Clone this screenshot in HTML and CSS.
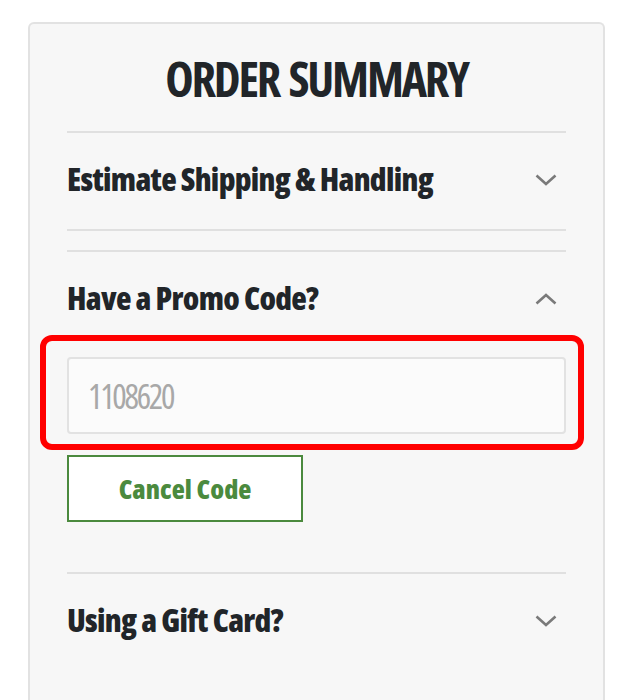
FILE: index.html
```html
<!DOCTYPE html>
<html>
<head>
<meta charset="utf-8">
<link rel="stylesheet" href="styles.css">
</head>
<body>
<div class="card">
  <h1 class="title">ORDER SUMMARY</h1>
  <section class="section collapsed">
    <div class="head">
      <span class="label">Estimate Shipping &amp; Handling</span>
      <svg class="chev" viewBox="0 0 22 12"><polyline points="1.5,1.5 11,10 20.5,1.5"/></svg>
    </div>
  </section>
  <section class="section open">
    <div class="head">
      <span class="label">Have a Promo Code?</span>
      <svg class="chev" viewBox="0 0 22 12"><polyline points="1.5,10.5 11,2 20.5,10.5"/></svg>
    </div>
    <div class="field-wrap">
      <input class="field" type="text" placeholder="1108620">
      <div class="highlight"></div>
    </div>
    <button class="cancel">Cancel Code</button>
  </section>
  <section class="section">
    <div class="head">
      <span class="label">Using a Gift Card?</span>
      <svg class="chev" viewBox="0 0 22 12"><polyline points="1.5,1.5 11,10 20.5,1.5"/></svg>
    </div>
  </section>
</div>
</body>
</html>
```
FILE: styles.css
```css
* { box-sizing: border-box; }
body {
  margin: 0;
  background: #fff;
  font-family: "Open Sans", "Roboto", sans-serif;
  font-stretch: condensed;
  color: #212529;
}
.card {
  margin: 22px 0 0 28px;
  width: 577px;
  height: 700px;
  background: #f7f7f7;
  border: 2px solid #e2e2e2;
  border-bottom: none;
  border-radius: 6px 6px 0 0;
  padding: 0 37px;
}
.title {
  margin: 0;
  padding-top: 27px;
  height: 107px;
  text-align: center;
  font-size: 48px;
  line-height: 56px;
  font-weight: 700;
  letter-spacing: -2.2px;
  word-spacing: 3px;
  font-stretch: condensed;
  color: #212529;
}
.section {
  border-top: 2px solid #e0e0e0;
}
.section.collapsed {
  border-bottom: 2px solid #e0e0e0;
  margin-bottom: 19px;
}
.head {
  height: 96px;
  padding-bottom: 5px;
  display: flex;
  align-items: center;
  justify-content: space-between;
}
.label {
  font-size: 32px;
  font-weight: 800;
  letter-spacing: -0.7px;
  color: #212529;
}
.chev {
  width: 22px;
  height: 12px;
  margin-right: 9px;
  margin-top: 3px;
  fill: none;
  stroke: #7a7a7a;
  stroke-width: 2.6;
}
.field-wrap {
  position: relative;
  margin-top: 9px;
}
.field {
  display: block;
  width: 100%;
  height: 77px;
  border: 2px solid #e2e2e2;
  border-radius: 4px;
  background: #fbfbfb;
  padding: 0 19px;
  font-family: inherit;
  font-stretch: condensed;
  font-size: 34px;
  letter-spacing: -2.3px;
  color: #333;
  outline: none;
}
.field::placeholder { color: #a8a8a8; }
.highlight {
  position: absolute;
  left: -27px;
  top: -22px;
  right: -18px;
  bottom: -16px;
  border: 6px solid #ff0000;
  border-radius: 12px;
  pointer-events: none;
}
.cancel {
  display: block;
  margin: 21px 0 50px;
  width: 236px;
  height: 67px;
  background: #fff;
  border: 2px solid #4b8a3e;
  font-family: inherit;
  font-stretch: condensed;
  font-size: 27px;
  font-weight: 800;
  color: #4b8a3e;
  padding: 0;
}
```
